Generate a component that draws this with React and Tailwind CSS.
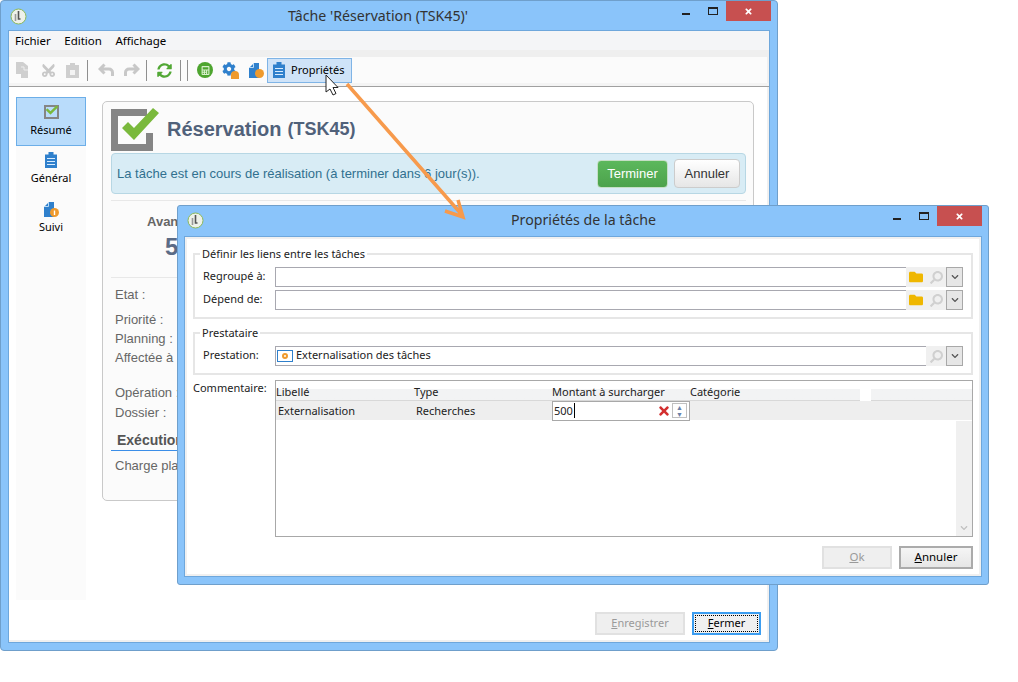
import React from "react";
import { FaCheck, FaFolder, FaSearch, FaChevronDown, FaTimes, FaSyncAlt, FaCut, FaCalculator, FaCog } from "react-icons/fa";

const ui = "font-['Noto_Sans','Open_Sans',sans-serif]";
const arial = "font-['Liberation_Sans',Arial,sans-serif]";

// petite icone de l'application (titre de fenetre)
const AppIcon = ({ className = "" }) => (
  <svg width="17" height="17" viewBox="0 0 17 17" className={`shrink-0 ${className}`}>
    <circle cx="8.5" cy="8.5" r="7.5" fill="#eef1ea" stroke="#8db95a" strokeWidth="1" />
    <path d="M5.500 6v7" stroke="#999" strokeWidth="1.600" fill="none" />
    <path d="M8.500 3v8h2" stroke="#555" strokeWidth="1.600" fill="none" />
  </svg>
);

// boutons reduire / agrandir / fermer
const WindowButtons = () => (
  <div className="ml-auto flex items-start shrink-0">
    <div className="w-[8px] h-[2px] bg-[#222] mt-[12px] mr-[18px]" />
    <div className="w-[10px] h-[8px] border border-[#222] border-t-2 mt-[6px] mr-[8px]" />
    <div className="w-[45px] h-[20px] bg-[#c75050] flex items-center justify-center">
      <FaTimes size={9} color="#fff" />
    </div>
  </div>
);

const Clipboard = () => (
  <svg width="12" height="16" viewBox="0 0 12 16">
    <path d="M0 2.500h3.500V0h5v2.500H12V16H0z" fill="#2f80cc" />
    <path d="M2 6.500h8M2 9.500h8M2 12.500h8" stroke="#d8ecff" strokeWidth="1.100" />
  </svg>
);

const DocBadge = ({ dot }) => (
  <svg width="16" height="16" viewBox="0 0 16 16">
    <path d="M1 6l5-5h5v15H1z" fill="#2f80cc" />
    <path d="M1 5.500h4.500V1" fill="none" stroke="#bcdcf7" strokeWidth="1" />
    <circle cx="11.500" cy="11.500" r="4.500" fill="#ef9a2d" />
    {dot && <path d="M11.500 9.500v4.500" stroke="#fff" strokeWidth="1.400" />}
  </svg>
);

const UndoIcon = ({ flip }) => (
  <svg width="17" height="14" viewBox="0 0 17 14" className={`shrink-0 ${flip ? "-scale-x-100" : ""}`}>
    <path d="M6.500 1.500L2 6l4.500 4.500M2.500 6H11a3.500 3.500 0 0 1 3.500 3.500V13" fill="none" stroke="#c8c8c8" strokeWidth="3" />
  </svg>
);

const Separator = () => <div className="w-px h-[21px] bg-[#8f8f8f]" />;

const ToolBar = () => (
  <div className="h-[26px] bg-[#fbfbfb] flex items-center pl-[7px] mr-[2px]">
    <div className="flex items-center gap-[8px]">
      <svg width="15" height="16" viewBox="0 0 15 16">
        <path d="M0 0h7l5 4v12H5V12H0z" fill="#cfcfcf" />
        <path d="M5 5h3v3h4" fill="none" stroke="#eee" />
      </svg>
      <FaCut size={15} color="#c8c8c8" className="ml-[2px] -rotate-90" />
      <svg width="13" height="15" viewBox="0 0 13 15" className="ml-[2px]">
        <path d="M0 2h4V0h5v2h4v13H0z" fill="#cfcfcf" />
        <path d="M4 7h5v5H4z" fill="#f3f3f3" />
      </svg>
      <Separator />
      <div className="flex w-[42px] pl-[2px] gap-[8px]">
        <UndoIcon />
        <UndoIcon flip />
      </div>
      <Separator />
      <FaSyncAlt size={15} color="#52a835" className="ml-[2px]" />
      <div className="flex gap-[6px]">
        <Separator />
        <Separator />
      </div>
    </div>
    <div className="flex items-center gap-[9px] ml-[9px]">
      <div className="w-[16px] h-[16px] rounded-full bg-[#4ea52f] flex items-center justify-center">
        <FaCalculator size={9} color="#d8f0cc" />
      </div>
      <div className="relative w-[17px] h-[17px]">
        <FaCog size={14} color="#2f80cc" />
        <div className="absolute right-0 bottom-0 w-[8px] h-[8px] rounded-t-full bg-[#ef9a2d]" />
      </div>
      <DocBadge />
    </div>
    <div className="ml-[3px] h-[25px] w-[85px] bg-[#cfe3f8] border border-[#7fb4e6] flex items-center pl-[5px] gap-[6px] text-[11px] text-black">
      <Clipboard />
      <span>Propriétés</span>
    </div>
  </div>
);

const NavItem = ({ icon, label, active }) => (
  <div className={`h-[49px] flex flex-col items-center justify-start pt-[5px] text-[11px] leading-[16px] text-black ${active ? "bg-[#b9dcfb] border border-[#6caee8]" : ""}`}>
    <div className="h-[18px] flex items-center">{icon}</div>
    <span className="mt-[1px]">{label}</span>
  </div>
);

const InfoLabel = ({ children, className = "" }) => (
  <div className={`text-[13px] leading-[19px] text-[#666] ${className}`}>{children}</div>
);

const SummaryCard = () => (
  <div className={`${arial} ml-[16px] mt-[14px] w-[652px] h-[400px] shrink-0 rounded-[5px] border border-[#c9c9c9] bg-[#fbfbfb] px-[8px] pt-[6px]`}>
    <div className="flex items-center h-[43px]">
      <svg width="50" height="43" viewBox="0 0 50 43" className="shrink-0">
        <path d="M0 1h36v7H7v28h28V25h7v18H0z" fill="#858585" />
        <path d="M11 20l6-6 6 6L42 0l6 5-25 27z" fill="#7ab93c" />
      </svg>
      <span className="ml-[6px] mb-[2px] text-[20px] font-bold text-[#50617a] leading-none">Réservation</span>
      <span className="ml-[6px] mb-[2px] text-[18px] font-bold text-[#50617a] leading-none">(TSK45)</span>
    </div>
    <div className="mt-[2px] w-[635px] h-[41px] rounded-[4px] border border-[#b7d7e4] bg-[#d8ecf5] flex items-center pl-[5px] pr-[5px] text-[13px] text-[#31708f]">
      <span className="flex-1">La tâche est en cours de réalisation (à terminer dans 6 jour(s)).</span>
      <div className="w-[71px] h-[28px] rounded-[4px] border border-[#c5dfc5] bg-gradient-to-b from-[#5cb85c] to-[#4ca24c] flex items-center justify-center text-white">Terminer</div>
      <div className="ml-[6px] w-[66px] h-[29px] rounded-[4px] border border-[#cccccc] bg-gradient-to-b from-white to-[#e6e6e6] flex items-center justify-center text-[#333]">Annuler</div>
    </div>
    <div className="mt-[6px] h-px w-[635px] bg-[#e8e8e8]" />
    <div className="mt-[11px] pl-[36px] text-[13px] leading-[20px] font-bold text-[#666]">Avan</div>
    <div className="pl-[54px] mt-[2px] text-[24px] leading-[26px] font-bold text-[#5b6b86]">5</div>
    <div className="mt-[17px] h-px w-[635px] bg-[#e8e8e8]" />
    <div className="pl-[4px] mt-[7px]">
      <InfoLabel>Etat :</InfoLabel>
      <InfoLabel className="mt-[6px]">Priorité :</InfoLabel>
      <InfoLabel>Planning :</InfoLabel>
      <InfoLabel>Affectée à</InfoLabel>
      <InfoLabel className="mt-[16px]">Opération :</InfoLabel>
      <InfoLabel className="mt-[1px]">Dossier :</InfoLabel>
    </div>
    <div className="mt-[10px] pl-[6px] h-[19px] border-b border-[#3b8ee8] text-[14px] leading-[17px] font-bold text-[#555]">Exécution</div>
    <InfoLabel className="pl-[4px] mt-[5px]">Charge pla</InfoLabel>
  </div>
);

const DialogButton = ({ children, disabled, focused, className = "" }) => (
  <div className={`h-[23px] flex items-center justify-center text-[11px] border-2 ${disabled ? "border-[#e1e1e1] bg-[#efefef] text-[#9a9a9a]" : focused ? "border-[#3c9df0] text-black bg-[#f0f0f0]" : "border-[#ababab] text-black bg-gradient-to-b from-[#f5f5f5] to-[#e6e6e6]"} ${className}`}>
    {children}
  </div>
);

const MainWindow = () => (
  <div className={`${ui} absolute left-0 top-0 w-[778px] h-[651px] rounded-[4px] bg-[#8ac4fa] border border-[#6f9fcb] flex flex-col`}>
    <div className="h-[29px] flex items-start pl-[9px] pr-[6px] shrink-0">
      <AppIcon className="mt-[7px]" />
      <div className="ml-[261px] mt-[5px] text-[14.2px] text-[#333] leading-[20px]">Tâche 'Réservation (TSK45)'</div>
      <WindowButtons />
    </div>
    <div className="mx-[7px] mb-[7px] flex-1 bg-white border border-[#6ea7dc] shadow-[inset_-2px_-2px_0_#f0f0f0] flex flex-col">
      <div className="h-[19px] bg-[#f4f5f7] flex items-center gap-[13.5px] pl-[6px] pt-[1px] text-[11.5px] text-black shrink-0">
        <span>Fichier</span>
        <span>Edition</span>
        <span>Affichage</span>
      </div>
      <div className="h-[7px] bg-[#efefef] shrink-0" />
      <ToolBar />
      <div className="h-[4px] bg-[#f4f4f4] border-b border-[#a0a0a0] shrink-0" />
      <div className="flex flex-1">
        <div className="ml-[7px] mt-[10px] w-[70px] h-[503px] bg-[#fbfbfb] flex flex-col">
          <NavItem active label="Résumé" icon={
            <div className="relative w-[15px] h-[14px] border-2 border-[#858585]">
              <FaCheck size={12} color="#7ab93c" className="absolute -top-[3px] left-0" />
            </div>
          } />
          <NavItem label="Général" icon={<Clipboard />} />
          <NavItem label="Suivi" icon={<DocBadge dot />} />
        </div>
        <div className="flex-1 flex flex-col">
          <SummaryCard />
          <div className="mt-auto self-end mr-[8px] mb-[7px] flex gap-[7px]">
            <DialogButton disabled className="w-[90px]"><span><u>E</u>nregistrer</span></DialogButton>
            <DialogButton focused className="w-[69px]">
              <span className="border border-dotted border-black w-[63px] h-[17px] flex items-center justify-center"><span><u>F</u>ermer</span></span>
            </DialogButton>
          </div>
        </div>
      </div>
    </div>
  </div>
);

const IconCell = ({ children }) => (
  <div className="w-[20px] h-[20px] bg-[#f0f0f0] flex items-center justify-center shrink-0">{children}</div>
);

const Chevron = () => (
  <div className="w-[17px] h-[20px] bg-[#e6e6e6] border border-[#a8a8a8] flex items-center justify-center shrink-0">
    <FaChevronDown size={8} color="#555" />
  </div>
);

const LookupField = ({ label, folder, value }) => (
  <div className="flex items-center h-[20px]">
    <div className="w-[72px] pb-[2px] text-[11px] text-[#222] leading-[18px]">{label}</div>
    <div className="flex-1 h-[20px] border border-[#a8a8b0] border-r-0 bg-white flex items-center pl-px pb-[1px] text-[11px] text-[#222]">{value}</div>
    {folder && <IconCell><FaFolder size={14} color="#efb700" /></IconCell>}
    <IconCell><FaSearch size={13} color="#d0d0d0" className="-scale-x-100" /></IconCell>
    <Chevron />
  </div>
);

const Group = ({ legend, className = "", children }) => (
  <div className={`relative border-2 border-[#e6e6e6] pl-[8px] pr-[8px] ${className}`}>
    <div className="absolute left-[5px] -top-[9px] bg-white px-[2px] text-[11px] leading-[16px] text-[#222]">{legend}</div>
    {children}
  </div>
);

const PropertiesDialog = () => (
  <div className={`${ui} absolute left-[177px] top-[205px] w-[812px] h-[380px] rounded-[3px] bg-[#8ac4fa] border border-[#6f9fcb] flex flex-col`}>
    <div className="h-[30px] flex items-start pl-[9px] pr-[6px] shrink-0">
      <AppIcon className="mt-[6px]" />
      <div className="ml-[307px] mt-[4px] text-[14.2px] text-[#333] leading-[20px]">Propriétés de la tâche</div>
      <WindowButtons />
    </div>
    <div className="mx-[6px] mb-[7px] flex-1 bg-white border border-[#6ea7dc] shadow-[inset_0_0_0_2px_#f0f0f0] px-[8px] pt-[16px]">
      <Group legend="Définir les liens entre les tâches" className="h-[66px] w-[780px] pt-[12px]">
        <LookupField label="Regroupé à:" folder />
        <div className="mt-[3px]"><LookupField label="Dépend de:" folder /></div>
      </Group>
      <Group legend="Prestataire" className="mt-[13px] h-[43px] w-[780px] pt-[12px]">
        <LookupField label="Prestation:" value={
          <span className="flex items-center gap-[3px]">
            <span className="w-[16px] h-[12px] border border-[#2f80cc] bg-white flex items-center justify-center">
              <span className="w-[6px] h-[6px] rounded-full border-2 border-[#ef9a2d]" />
            </span>
            Externalisation des tâches
          </span>
        } />
      </Group>
      <div className="flex mt-[5px] w-[780px]">
        <div className="w-[82px] text-[11px] leading-[16px] text-[#222]">Commentaire:</div>
        <div className="flex-1 h-[157px] border border-[#a8a8a8] flex flex-col text-[11px] text-[#222]">
          <div className="h-[20px] pt-[4px] bg-gradient-to-b from-white from-40% to-[#f2f3f4] to-40% border-b border-[#d8d8d8] flex items-center shrink-0">
            <div className="w-[138px]">Libellé</div>
            <div className="w-[138px]">Type</div>
            <div className="w-[138px]">Montant à surcharger</div>
            <div className="w-[170px]">Catégorie</div>
            <div className="w-[11px] -mt-[4px] h-[20px] bg-white" />
          </div>
          <div className="h-[19px] bg-[#eeeeee] flex items-center shrink-0">
            <div className="w-[138px] pl-[2px] pt-[2px]">Externalisation</div>
            <div className="w-[138px] pl-[2px] pt-[2px]">Recherches</div>
            <div className="w-[138px] h-[20px] border border-[#a8a8a8] bg-white flex items-center pl-px">
              <span className="border-r border-black pr-px leading-[15px]">500</span>
              <FaTimes size={14} color="#d32f2f" className="ml-auto" />
              <div className="ml-[1px] mr-[2px] w-[15px] h-[15px] border border-[#c0c0c0] flex flex-col items-center justify-center text-[7px] leading-[7px] text-[#6a80a8]">
                <span>▲</span>
                <span>▼</span>
              </div>
            </div>
          </div>
          <div className="flex-1 flex justify-end">
            <div className="w-[16px] mt-[1px] bg-[#f0f0f0] flex items-end justify-center pb-[4px]">
              <FaChevronDown size={8} color="#c0c0c0" />
            </div>
          </div>
        </div>
      </div>
      <div className="flex justify-end gap-[7px] mt-[9px] w-[780px]">
        <DialogButton disabled className="w-[70px]"><span className="text-[11.5px] -mt-[2px]"><u>O</u>k</span></DialogButton>
        <DialogButton className="w-[74px]"><span className="text-[11.5px] -mt-[2px]"><u>A</u>nnuler</span></DialogButton>
      </div>
    </div>
  </div>
);

// fleche orange + curseur par-dessus les deux fenetres
const Overlay = () => (
  <svg className="absolute left-0 top-0 pointer-events-none" width="1018" height="682">
    <path d="M347 84L463 216M458 200L463 217L445 211" fill="none" stroke="#f79a4c" strokeWidth="3.500" />
    <path d="M326 75v17l4-3 3 6 3-1.500-3-6h5z" fill="#fff" stroke="#222" strokeWidth="1" />
  </svg>
);

export default function App() {
  return (
    <div className="relative w-[1018px] h-[682px] bg-white overflow-hidden">
      <MainWindow />
      <PropertiesDialog />
      <Overlay />
    </div>
  );
}
